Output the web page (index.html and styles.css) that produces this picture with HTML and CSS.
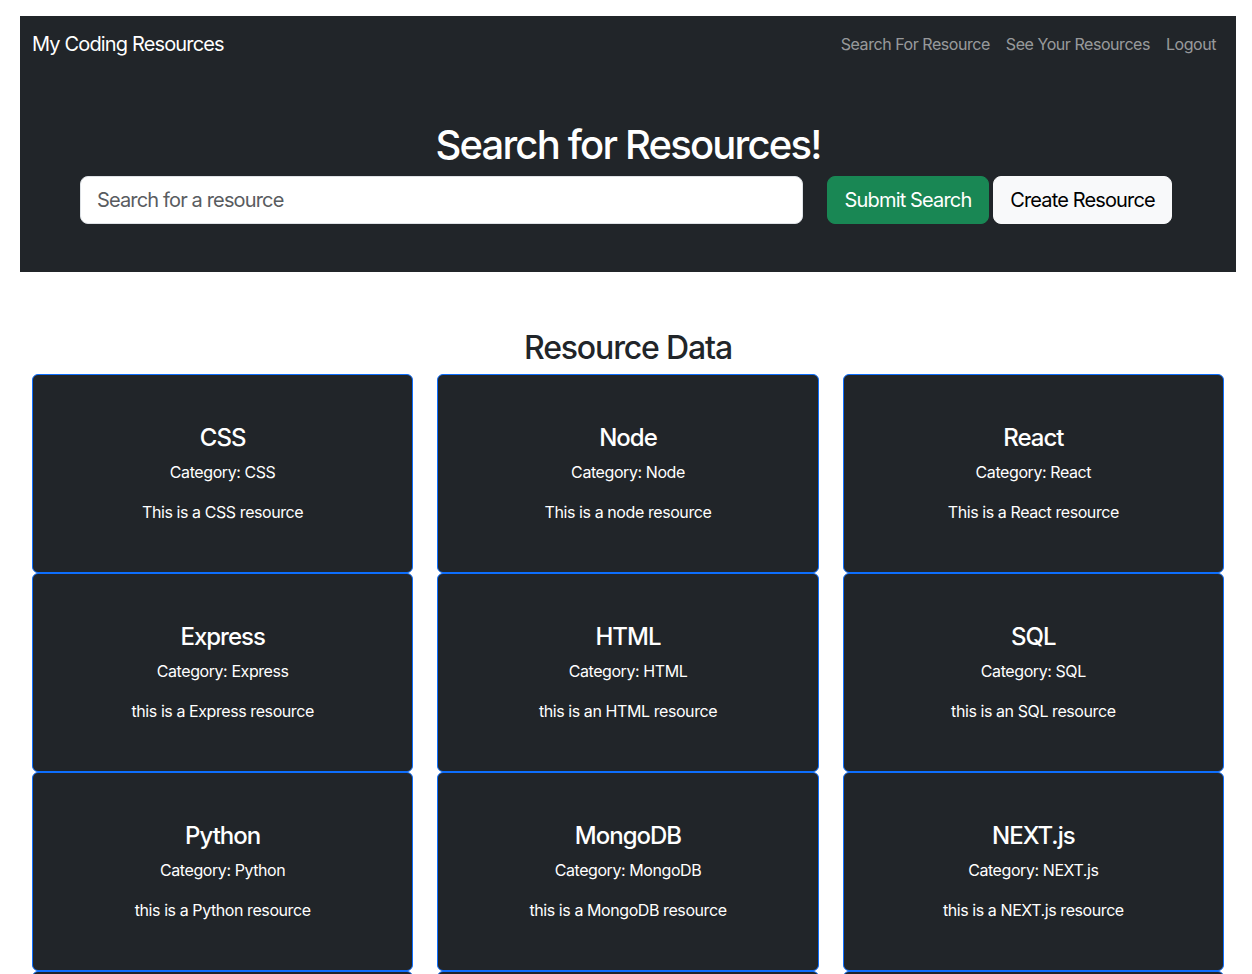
FILE: index.html
```html
<!DOCTYPE html>
<html lang="en">
<head>
<meta charset="utf-8">
<title>My Coding Resources</title>
<link rel="stylesheet" href="styles.css">
</head>
<body>
<header class="hero">
  <nav class="navbar">
    <a class="brand" href="#">My Coding Resources</a>
    <ul class="nav-links">
      <li><a href="#">Search For Resource</a></li>
      <li><a href="#">See Your Resources</a></li>
      <li><a href="#">Logout</a></li>
    </ul>
  </nav>
  <div class="hero-body">
    <h1 class="hero-title">Search for Resources!</h1>
    <form class="search-form">
      <input class="search-input" type="text" placeholder="Search for a resource">
      <button class="btn btn-success" type="button">Submit Search</button>
      <button class="btn btn-light" type="button">Create Resource</button>
    </form>
  </div>
</header>
<main class="content">
  <h2 class="section-title">Resource Data</h2>
  <div class="card-grid">
    <div class="card"><h4 class="card-title">CSS</h4><p class="card-cat">Category: CSS</p><p class="card-desc">This is a CSS resource</p></div>
    <div class="card"><h4 class="card-title">Node</h4><p class="card-cat">Category: Node</p><p class="card-desc">This is a node resource</p></div>
    <div class="card"><h4 class="card-title">React</h4><p class="card-cat">Category: React</p><p class="card-desc">This is a React resource</p></div>
    <div class="card"><h4 class="card-title">Express</h4><p class="card-cat">Category: Express</p><p class="card-desc">this is a Express resource</p></div>
    <div class="card"><h4 class="card-title">HTML</h4><p class="card-cat">Category: HTML</p><p class="card-desc">this is an HTML resource</p></div>
    <div class="card"><h4 class="card-title">SQL</h4><p class="card-cat">Category: SQL</p><p class="card-desc">this is an SQL resource</p></div>
    <div class="card"><h4 class="card-title">Python</h4><p class="card-cat">Category: Python</p><p class="card-desc">this is a Python resource</p></div>
    <div class="card"><h4 class="card-title">MongoDB</h4><p class="card-cat">Category: MongoDB</p><p class="card-desc">this is a MongoDB resource</p></div>
    <div class="card"><h4 class="card-title">NEXT.js</h4><p class="card-cat">Category: NEXT.js</p><p class="card-desc">this is a NEXT.js resource</p></div>
    <div class="card"></div>
    <div class="card"></div>
    <div class="card"></div>
  </div>
</main>
</body>
</html>
```

FILE: styles.css
```css
* { box-sizing: border-box; }

body {
  margin: 0;
  font-family: Inter, "Liberation Sans", sans-serif;
  font-size: 16px;
  line-height: 1.5;
  color: #212529;
  background: #fff;
}

.hero {
  margin: 16px 16px 0 20px;
  background: #212529;
  color: #fff;
}

.navbar {
  display: flex;
  align-items: center;
  justify-content: space-between;
  padding: 8px 12px;
  height: 56px;
}

.brand {
  color: #fff;
  text-decoration: none;
  font-size: 20px;
  line-height: 30px;
  letter-spacing: -0.85px;
  white-space: nowrap;
}

.nav-links {
  display: flex;
  list-style: none;
  margin: 0;
  padding: 0;
}

.nav-links a {
  display: block;
  padding: 8px;
  color: rgba(255, 255, 255, 0.55);
  text-decoration: none;
  font-size: 16px;
  line-height: 24px;
  letter-spacing: -0.45px;
  white-space: nowrap;
}

.hero-body {
  padding: 49px 0 48px;
}

.hero-title {
  margin: 0 0 7px;
  text-align: center;
  font-size: 40px;
  font-weight: 500;
  line-height: 1.2;
  letter-spacing: -1.8px;
}

.search-form {
  display: flex;
  width: 1092px;
  margin: 0 0 0 60px;
}

.search-input {
  flex: 1;
  min-width: 0;
  height: 48px;
  margin-right: 24px;
  padding: 8px 16px;
  border: 1px solid #dee2e6;
  border-radius: 8px;
  font-family: inherit;
  font-size: 20px;
  color: #212529;
  background: #fff;
  letter-spacing: -0.85px;
}

.search-input::placeholder {
  color: #595c5f;
}

.btn {
  flex: none;
  height: 48px;
  padding: 8px 0;
  border: 1px solid transparent;
  border-radius: 8px;
  font-family: inherit;
  font-size: 20px;
  line-height: 30px;
  letter-spacing: -0.85px;
  white-space: nowrap;
  cursor: pointer;
}

.btn-success {
  width: 162px;
  background: #198754;
  border-color: #198754;
  color: #fff;
  margin-right: 4px;
}

.btn-light {
  width: 179px;
  background: #f8f9fa;
  border-color: #f8f9fa;
  color: #000;
}

.content {
  padding: 57px 28px 0 32px;
}

.section-title {
  margin: 0 0 7px;
  text-align: center;
  font-size: 32px;
  font-weight: 500;
  line-height: 38px;
  letter-spacing: -1.15px;
}

.card-grid {
  display: grid;
  grid-template-columns: repeat(3, 1fr);
  column-gap: 24px;
}

.card {
  height: 199px;
  padding: 49px 16px 0;
  background: #212529;
  color: #fff;
  border: 1px solid #0d6efd;
  border-radius: 6px;
  text-align: center;
}

.card-title {
  margin: 0 0 7px;
  font-size: 24px;
  font-weight: 500;
  line-height: 1.2;
  letter-spacing: -1px;
}

.card-cat,
.card-desc {
  margin: 0 0 16px;
  font-size: 16px;
  line-height: 24px;
  letter-spacing: -0.42px;
}
```
